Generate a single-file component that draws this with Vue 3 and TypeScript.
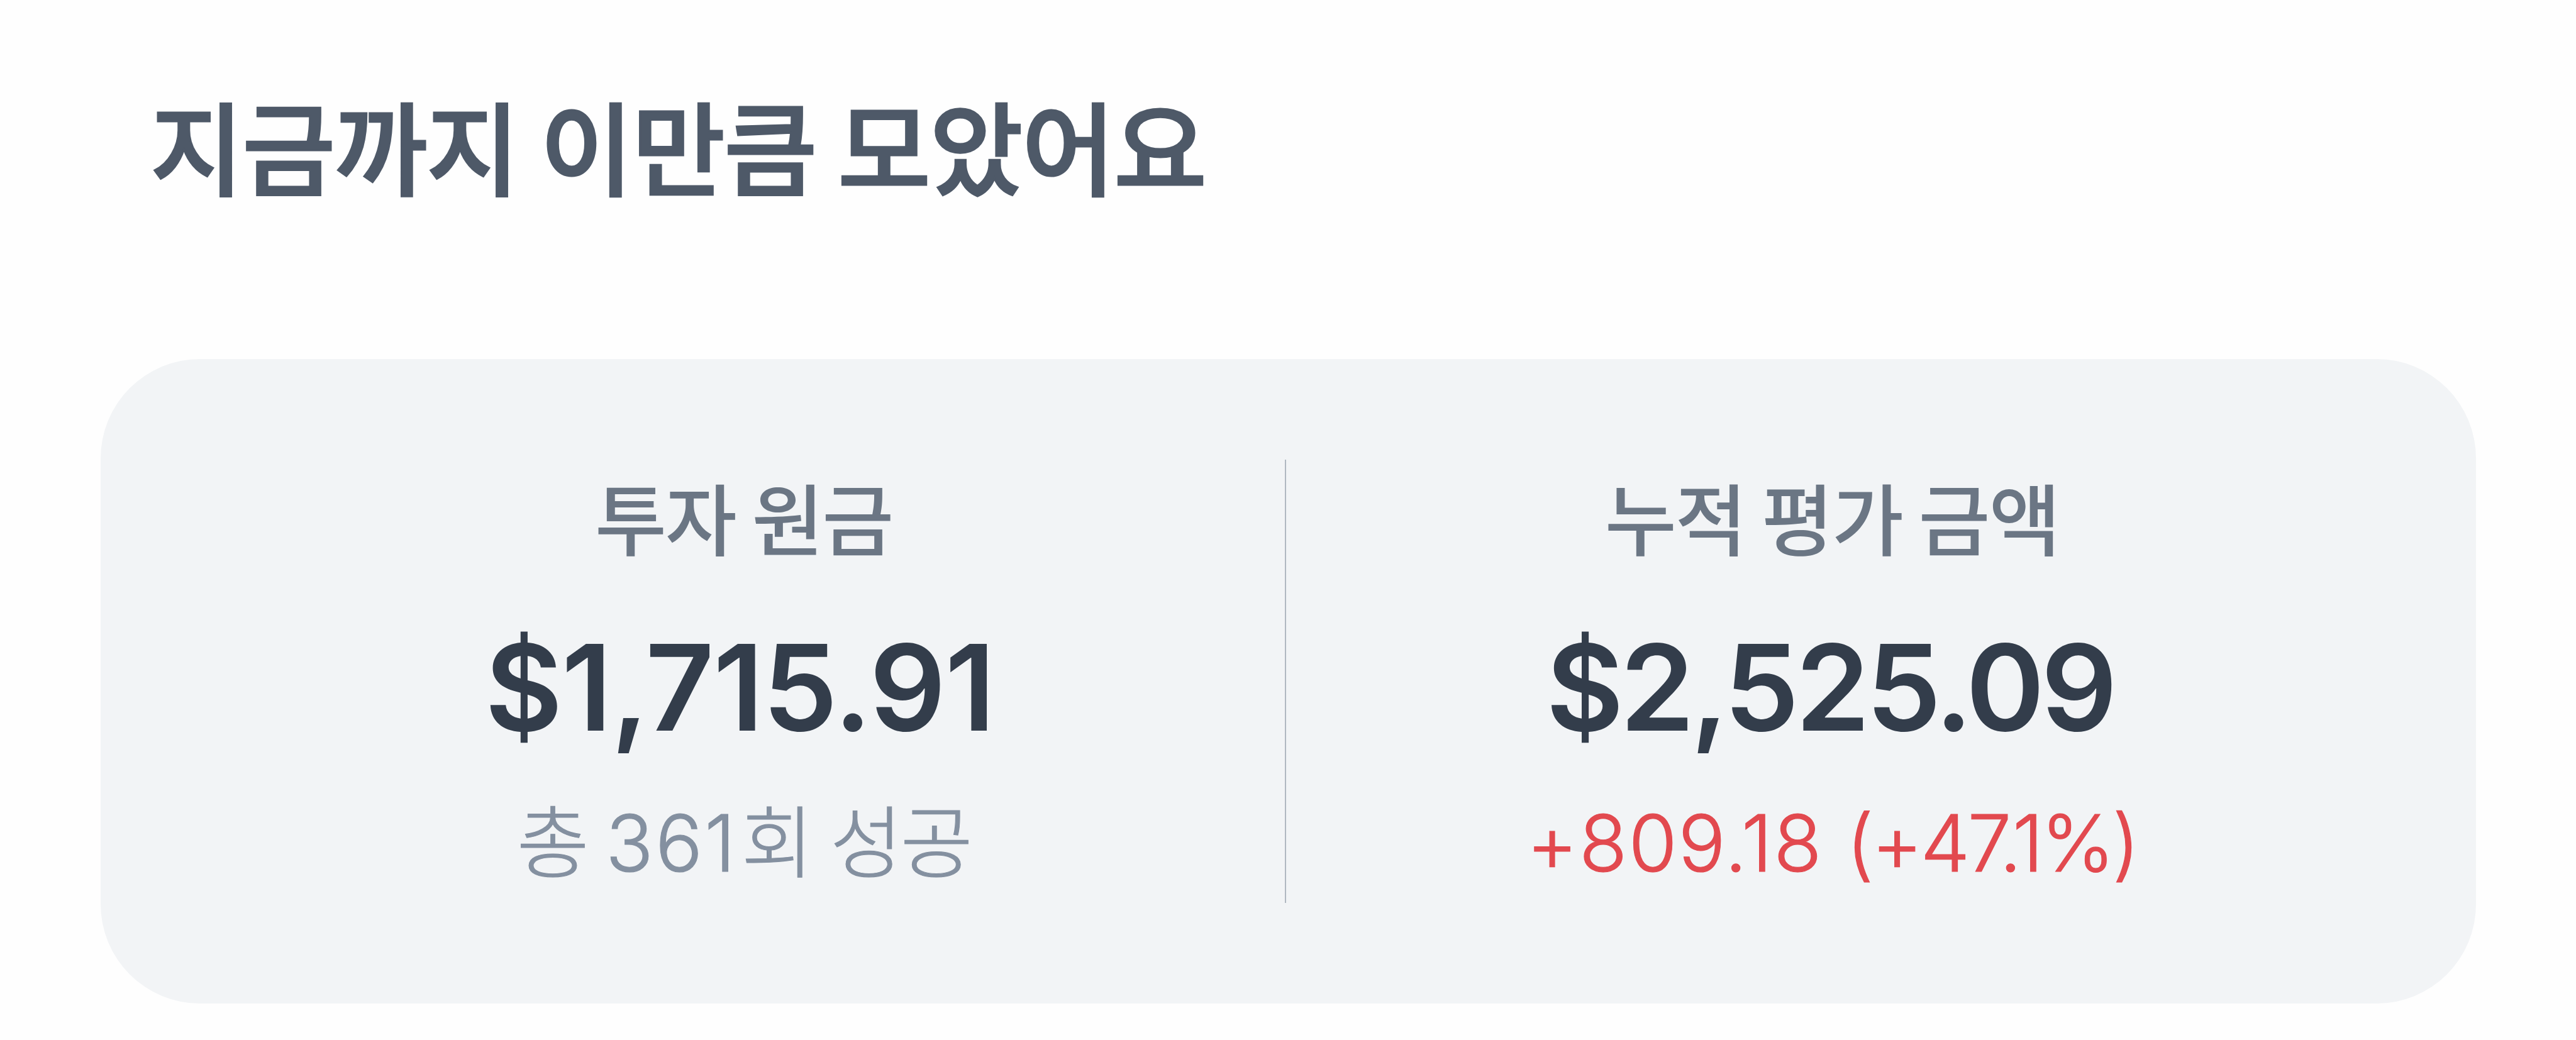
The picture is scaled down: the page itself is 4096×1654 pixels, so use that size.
<script setup lang="ts">
interface NotePart {
  kind: 'text' | 'count' | 'gain' | 'rate'
  value: string
}

interface Stat {
  key: string
  label: string
  amount: string
  note: NotePart[]
}

const stats: Stat[] = [
  {
    key: 'principal',
    label: '투자 원금',
    amount: '$1,715.91',
    note: [
      { kind: 'text', value: '총 ' },
      { kind: 'count', value: '361' },
      { kind: 'text', value: '회 성공' },
    ],
  },
  {
    key: 'valuation',
    label: '누적 평가 금액',
    amount: '$2,525.09',
    note: [
      { kind: 'gain', value: '+809.18 ' },
      { kind: 'rate', value: '(+47.1%)' },
    ],
  },
]
</script>

<template>
  <main class="page">
    <h1 class="title">지금까지 이만큼 모았어요</h1>
    <section class="card">
      <div v-for="stat in stats" :key="stat.key" class="stat" :class="stat.key">
        <p class="label">{{ stat.label }}</p>
        <p class="amount">{{ stat.amount }}</p>
        <p class="note"><span v-for="(part, i) in stat.note" :key="i" :class="part.kind">{{ part.value }}</span></p>
      </div>
    </section>
  </main>
</template>

<style>
body {
  margin: 0;
  background: #fefefe;
}
</style>

<style scoped>
.page {
  box-sizing: border-box;
  width: 4096px;
  height: 1654px;
  padding: 148px 159px 0 160px;
  overflow: hidden;
  font-family: Inter, "Noto Sans CJK KR", sans-serif;
  white-space: pre;
}

.title {
  margin: 0 0 262px;
  padding-left: 79px;
  font: 500 161px/161px "Noto Sans CJK KR", sans-serif;
  letter-spacing: -1.8px;
  color: #4e5968;
  -webkit-text-stroke: 3px #4e5968;
}

.card {
  box-sizing: border-box;
  display: flex;
  height: 1025px;
  padding: 160px 156px;
  border-radius: 158px;
  background: #f2f4f6;
}

.stat {
  box-sizing: border-box;
  flex: none;
  width: 1729px;
  padding-top: 27px;
  text-align: center;
}

.principal {
  padding-left: 6px;
  border-right: 2px solid #b0b8c1;
}

.valuation {
  width: 1736px;
}

.label,
.amount,
.note {
  margin: 0;
}

.label {
  font: 500 124px/124px "Noto Sans CJK KR", sans-serif;
  letter-spacing: -2.2px;
  color: #6b7684;
}

.amount {
  margin-top: 116px;
  font-size: 190px;
  font-weight: 600;
  line-height: 190px;
  color: #333d4b;
}

.note {
  margin-top: 90px;
  font-size: 125px;
  font-weight: 300;
  line-height: 125px;
  color: #8490a0;
  -webkit-text-stroke: 1.2px currentColor;
}

.principal .amount {
  padding-right: 13px;
  letter-spacing: -1.7px;
}

.text {
  letter-spacing: -3.4px;
  word-spacing: -2px;
}

.count {
  margin-right: 6px;
  letter-spacing: 3.2px;
}

.valuation .amount {
  padding-right: 7px;
  letter-spacing: -5.9px;
}

.valuation .note {
  color: #e2494f;
}

.gain {
  letter-spacing: 2px;
}

.rate {
  letter-spacing: -3.7px;
}
</style>
